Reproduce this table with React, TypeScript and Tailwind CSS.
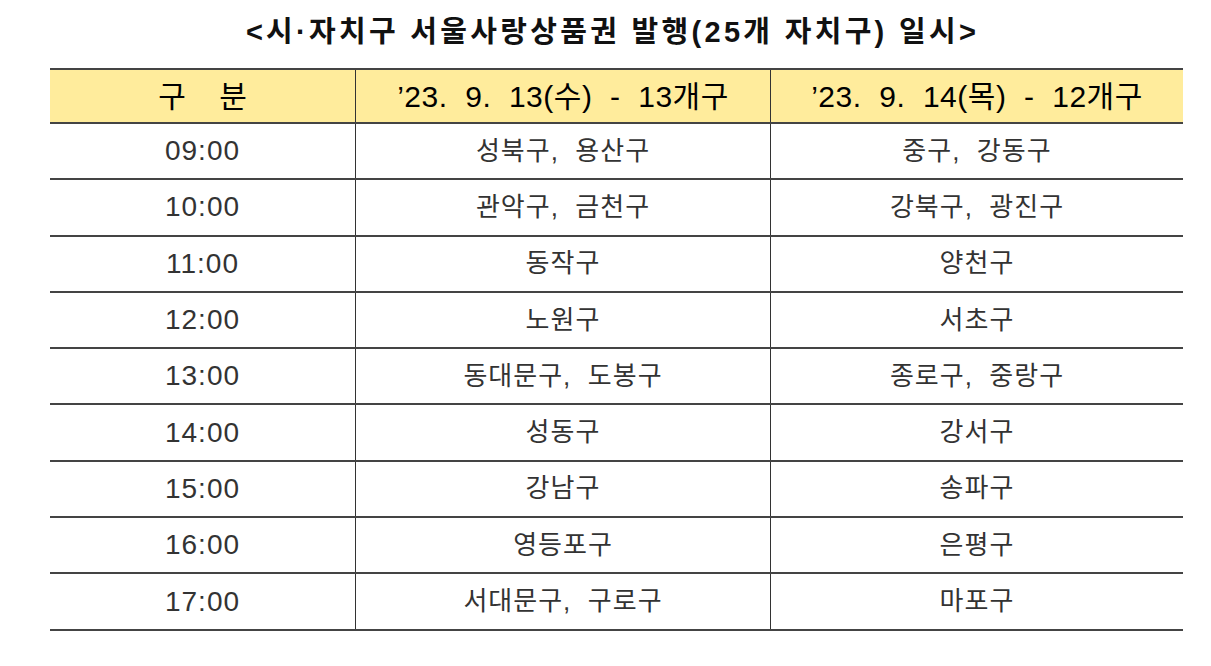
import React from "react";

const rows: [string, string, string][] = [
  ["09:00", "성북구, 용산구", "중구, 강동구"],
  ["10:00", "관악구, 금천구", "강북구, 광진구"],
  ["11:00", "동작구", "양천구"],
  ["12:00", "노원구", "서초구"],
  ["13:00", "동대문구, 도봉구", "종로구, 중랑구"],
  ["14:00", "성동구", "강서구"],
  ["15:00", "강남구", "송파구"],
  ["16:00", "영등포구", "은평구"],
  ["17:00", "서대문구, 구로구", "마포구"],
];

const font = { fontFamily: '"Liberation Sans", "Noto Sans CJK KR", sans-serif' };

export default function App() {
  return (
    <div className="w-[1211px] h-[666px] bg-white text-black" style={font}>
      <div className="h-[68px] flex items-center justify-center pb-[2px] pl-[14px]">
        <h1 className="text-[29px] font-semibold tracking-[3.3px] text-[#111]">
          &lt;시·자치구 서울사랑상품권 발행(25개 자치구) 일시&gt;
        </h1>
      </div>
      <div className="ml-[50px] w-[1133px]">
        <div className="grid grid-cols-[306px_415px_412px] h-[56px] bg-[#ffec9c] border-y-2 border-[#444]">
          <div className="flex items-center justify-center text-[30px] border-r-[1.5px] border-[#333] whitespace-pre">
            {"구    분"}
          </div>
          <div className="flex items-center justify-center text-[30px] tracking-[0.5px] border-r-[1.5px] border-[#333] whitespace-pre">
            {"’23.  9.  13(수)  -  13개구"}
          </div>
          <div className="flex items-center justify-center text-[30px] tracking-[0.5px] whitespace-pre">
            {"’23.  9.  14(목)  -  12개구"}
          </div>
        </div>
        {rows.map((r) => (
          <div
            key={r[0]}
            className="grid grid-cols-[306px_415px_412px] h-[56.3px] border-b-2 border-[#444] text-[#333]"
          >
            <div className="flex items-center justify-center text-[28px] tracking-[1px] border-r-[1.5px] border-[#333]">
              {r[0]}
            </div>
            <div className="flex items-center justify-center text-[26px] tracking-[1px] border-r-[1.5px] border-[#333] whitespace-pre">
              {r[1].replace(", ", ",  ")}
            </div>
            <div className="flex items-center justify-center text-[26px] tracking-[1px] whitespace-pre">
              {r[2].replace(", ", ",  ")}
            </div>
          </div>
        ))}
      </div>
    </div>
  );
}
